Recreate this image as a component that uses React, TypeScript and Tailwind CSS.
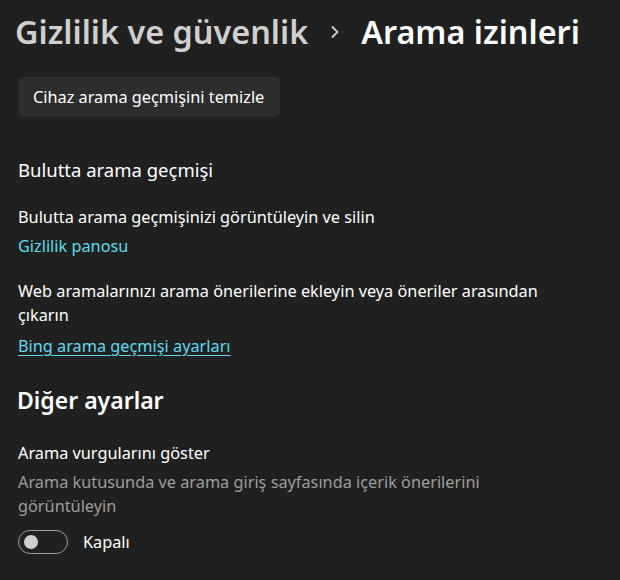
export default function App() {
  return (
    <main
      className="min-h-[580px] w-full bg-[#202020] pl-[18px] text-white"
      style={{ fontFamily: '"Noto Sans", "Open Sans", sans-serif' }}
    >
      <h1 className="flex h-[48px] items-center pt-[7px] box-content -ml-[3px] text-[32.4px] font-semibold leading-[48px] whitespace-nowrap">
        <span className="text-[#cfcfcf]">Gizlilik ve güvenlik</span>
        <svg
          className="ml-[21px] mr-[20px] mt-[2px]"
          width="12"
          height="14"
          viewBox="0 0 12 14"
          fill="none"
        >
          <path d="M3 1.5 L8.5 7 L3 12.5" stroke="#cfcfcf" strokeWidth="1.8" />
        </svg>
        <span className="text-white">Arama izinleri</span>
      </h1>

      <button className="mt-[22px] h-[40px] w-[262px] rounded-[5px] bg-[#2d2d2d] pl-[15px] text-left text-[16.3px] text-white">
        Cihaz arama geçmişini temizle
      </button>

      <h2 className="mt-[39px] text-[18.5px] leading-[28px]">Bulutta arama geçmişi</h2>

      <p className="mt-[21px] text-[16.3px] leading-[24px]">
        Bulutta arama geçmişinizi görüntüleyin ve silin
      </p>
      <a className="mt-[5px] block text-[16.3px] leading-[24px] text-[#5cdcee]" href="#">
        Gizlilik panosu
      </a>

      <p className="mt-[21px] text-[16.3px] leading-[24px]">
        Web aramalarınızı arama önerilerine ekleyin veya öneriler arasından
        <br />
        çıkarın
      </p>
      <a
        className="mt-[7px] block text-[16.3px] leading-[24px] text-[#5cdcee] underline underline-offset-[3px]"
        href="#"
      >
        Bing arama geçmişi ayarları
      </a>

      <h2 className="mt-[26px] -ml-[1px] text-[23px] font-semibold leading-[32px]">Diğer ayarlar</h2>

      <p className="mt-[25px] text-[16.3px] leading-[24px]">Arama vurgularını göster</p>
      <p className="mt-[5px] text-[16.3px] leading-[24px] text-[#9d9d9d]">
        Arama kutusunda ve arama giriş sayfasında içerik önerilerini
        <br />
        görüntüleyin
      </p>

      <div className="mt-[12px] flex items-center gap-[15px]">
        <div className="flex h-[24px] w-[50px] items-center rounded-full border border-[#9a9a9a] pl-[5px]">
          <div className="h-[14px] w-[14px] rounded-full bg-[#cecece]" />
        </div>
        <span className="text-[16.3px] leading-[24px]">Kapalı</span>
      </div>
    </main>
  );
}
